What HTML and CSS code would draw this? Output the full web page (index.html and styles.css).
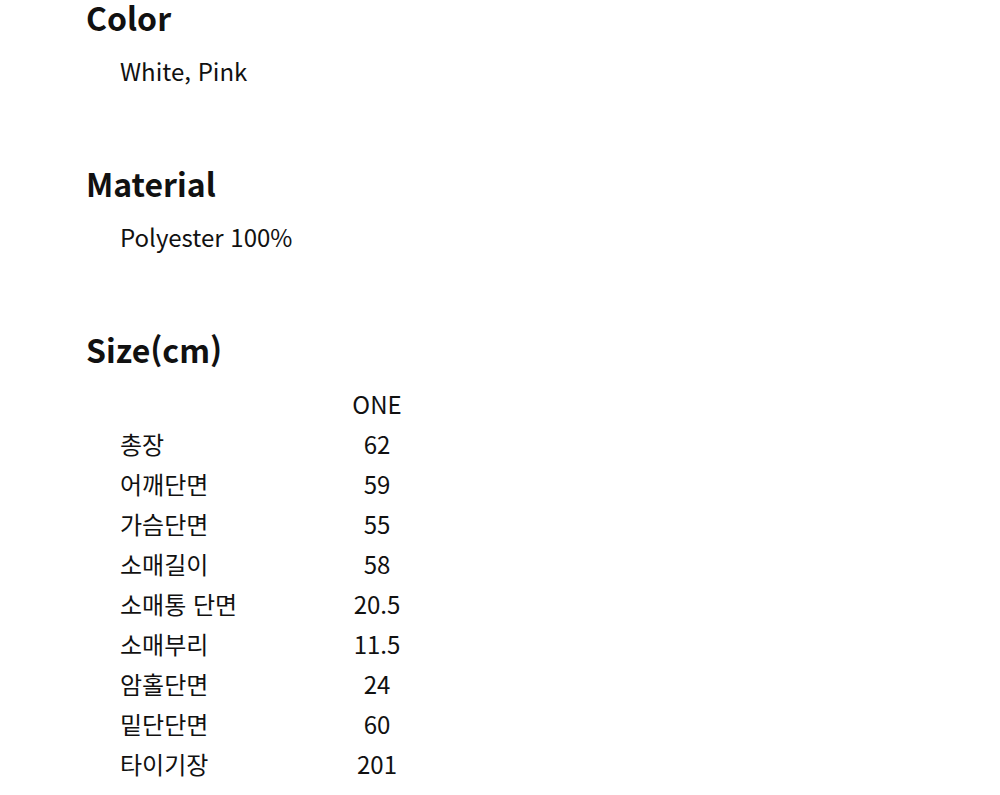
FILE: index.html
```html
<!DOCTYPE html>
<html lang="ko">
<head>
<meta charset="utf-8">
<link rel="stylesheet" href="styles.css">
</head>
<body>
<main class="page">
  <section class="sec">
    <h2 class="sec-title">Color</h2>
    <p class="sec-body">White, Pink</p>
  </section>
  <section class="sec">
    <h2 class="sec-title">Material</h2>
    <p class="sec-body">Polyester 100%</p>
  </section>
  <section class="sec">
    <h2 class="sec-title">Size(cm)</h2>
    <table class="size-table">
      <tr><th class="lbl"></th><th class="val">ONE</th></tr>
      <tr><td class="lbl">총장</td><td class="val">62</td></tr>
      <tr><td class="lbl">어깨단면</td><td class="val">59</td></tr>
      <tr><td class="lbl">가슴단면</td><td class="val">55</td></tr>
      <tr><td class="lbl">소매길이</td><td class="val">58</td></tr>
      <tr><td class="lbl">소매통 단면</td><td class="val">20.5</td></tr>
      <tr><td class="lbl">소매부리</td><td class="val">11.5</td></tr>
      <tr><td class="lbl">암홀단면</td><td class="val">24</td></tr>
      <tr><td class="lbl">밑단단면</td><td class="val">60</td></tr>
      <tr><td class="lbl">타이기장</td><td class="val">201</td></tr>
    </table>
  </section>
</main>
</body>
</html>
```
FILE: styles.css
```css
html, body {
  margin: 0;
  padding: 0;
  background: #fff;
}
body {
  font-family: "Noto Sans CJK KR", "Noto Sans", sans-serif;
  color: #111;
}
.page {
  padding: 0 0 0 86px;
}
.sec {
  display: flex;
  flex-direction: column;
  align-items: flex-start;
  margin-bottom: 75px;
}
.sec-title {
  margin: 0;
  font-size: 32px;
  font-weight: 700;
  line-height: 34px;
}
.sec-body {
  margin: 17px 0 0 34px;
  font-size: 24px;
  font-weight: 400;
  line-height: 40px;
}
.size-table {
  margin: 17px 0 0 34px;
  border-collapse: collapse;
  table-layout: fixed;
  font-size: 24px;
}
.size-table th,
.size-table td {
  padding: 0;
  height: 40px;
  font-weight: 400;
}
.lbl {
  width: 200px;
  text-align: left;
}
.val {
  width: 114px;
  text-align: center;
}
```
